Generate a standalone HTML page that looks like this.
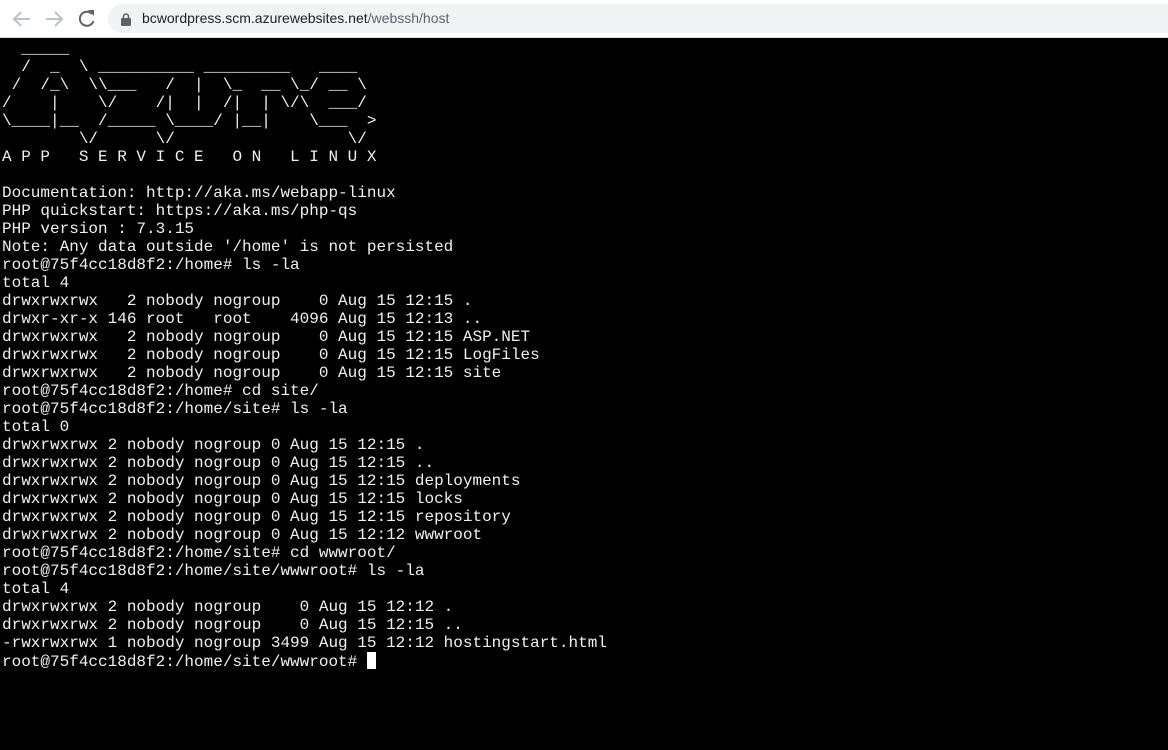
<!DOCTYPE html>
<html><head><style>
body{margin:0;width:1168px;height:750px;background:#000;overflow:hidden;position:relative}
.bar{position:absolute;left:0;top:0;width:1168px;height:37px;background:#fff;border-bottom:1px solid #dadce0}
.pill{position:absolute;left:108px;top:4px;width:1080px;height:29px;border-radius:15px;background:#f1f3f4}
.url{position:absolute;left:142px;top:10px;font:14px "Liberation Sans",sans-serif;color:#202124}
.url span{color:#5f6368}
pre{position:absolute;left:2px;top:40px;margin:0;font:16px/18px "Liberation Mono",monospace;color:#f0f0f0}
.cur{display:inline-block;width:9px;height:17px;background:#fff;vertical-align:-3px}
</style></head><body>
<div class="bar">
<svg width="110" height="37" style="position:absolute;left:0;top:0">
<g fill="none" stroke-width="2">
<path d="M30 19H14M21 12l-7 7 7 7" stroke="#bdc1c6"/>
<path d="M46 19h16M55 12l7 7-7 7" stroke="#bdc1c6"/>
<path d="M92 14a7 7 0 1 0 1.5 7" stroke="#5f6368"/>
</g>
<path d="M88 10h6v6z" fill="#5f6368"/>
</svg>
<div class="pill"></div>
<svg width="12" height="14" style="position:absolute;left:120px;top:12px"><rect x="1" y="6" width="10" height="8" rx="1" fill="#5f6368"/><path d="M3.5 6V4.5a2.5 2.5 0 0 1 5 0V6" stroke="#5f6368" stroke-width="1.6" fill="none"/></svg>
<div class="url">bcwordpress.scm.azurewebsites.net<span>/webssh/host</span></div>
</div>
<pre>  _____
  /  _  \ __________ _________   ____
 /  /_\  \\___   /  |  \_  __ \_/ __ \
/    |    \/    /|  |  /|  | \/\  ___/
\____|__  /_____ \____/ |__|    \___  &gt;
        \/      \/                  \/
A P P   S E R V I C E   O N   L I N U X

Documentation: http://aka.ms/webapp-linux
PHP quickstart: https://aka.ms/php-qs
PHP version : 7.3.15
Note: Any data outside '/home' is not persisted
root@75f4cc18d8f2:/home# ls -la
total 4
drwxrwxrwx   2 nobody nogroup    0 Aug 15 12:15 .
drwxr-xr-x 146 root   root    4096 Aug 15 12:13 ..
drwxrwxrwx   2 nobody nogroup    0 Aug 15 12:15 ASP.NET
drwxrwxrwx   2 nobody nogroup    0 Aug 15 12:15 LogFiles
drwxrwxrwx   2 nobody nogroup    0 Aug 15 12:15 site
root@75f4cc18d8f2:/home# cd site/
root@75f4cc18d8f2:/home/site# ls -la
total 0
drwxrwxrwx 2 nobody nogroup 0 Aug 15 12:15 .
drwxrwxrwx 2 nobody nogroup 0 Aug 15 12:15 ..
drwxrwxrwx 2 nobody nogroup 0 Aug 15 12:15 deployments
drwxrwxrwx 2 nobody nogroup 0 Aug 15 12:15 locks
drwxrwxrwx 2 nobody nogroup 0 Aug 15 12:15 repository
drwxrwxrwx 2 nobody nogroup 0 Aug 15 12:12 wwwroot
root@75f4cc18d8f2:/home/site# cd wwwroot/
root@75f4cc18d8f2:/home/site/wwwroot# ls -la
total 4
drwxrwxrwx 2 nobody nogroup    0 Aug 15 12:12 .
drwxrwxrwx 2 nobody nogroup    0 Aug 15 12:15 ..
-rwxrwxrwx 1 nobody nogroup 3499 Aug 15 12:12 hostingstart.html
root@75f4cc18d8f2:/home/site/wwwroot# <span class="cur"></span></pre>
</body></html>
